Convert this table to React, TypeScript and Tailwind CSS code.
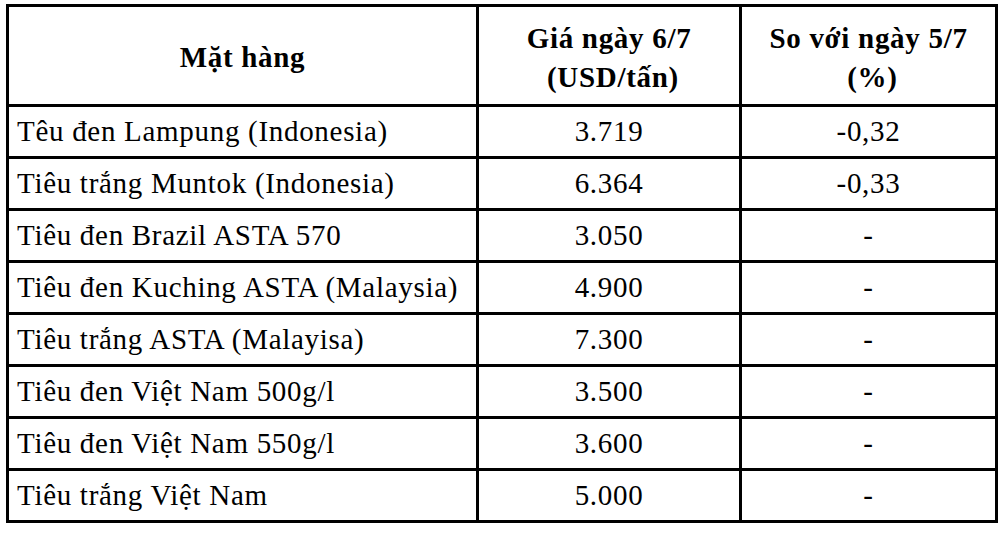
const rows = [
  { name: "Têu đen Lampung (Indonesia)", price: "3.719", change: "-0,32" },
  { name: "Tiêu trắng Muntok (Indonesia)", price: "6.364", change: "-0,33" },
  { name: "Tiêu đen Brazil ASTA 570", price: "3.050", change: "-" },
  { name: "Tiêu đen Kuching ASTA (Malaysia)", price: "4.900", change: "-" },
  { name: "Tiêu trắng ASTA (Malayisa)", price: "7.300", change: "-" },
  { name: "Tiêu đen Việt Nam 500g/l", price: "3.500", change: "-" },
  { name: "Tiêu đen Việt Nam 550g/l", price: "3.600", change: "-" },
  { name: "Tiêu trắng Việt Nam", price: "5.000", change: "-" },
];

export default function App() {
  return (
    <div className="w-[1000px] h-[533px] bg-white pt-[4px] pl-[6px] font-['Liberation_Serif','Times_New_Roman',serif] text-black">
      <table className="w-[989px] table-fixed border-collapse border-[3px] border-black">
        <colgroup>
          <col className="w-[470px]" />
          <col className="w-[263px]" />
          <col className="w-[256px]" />
        </colgroup>
        <thead>
          <tr className="h-[100px]">
            <th className="border-[3px] border-black text-center align-middle text-[29px] font-bold tracking-[0.7px] leading-[39px] pt-[4px]">
              Mặt hàng
            </th>
            <th className="border-[3px] border-black text-center align-middle text-[29px] font-bold tracking-[0.7px] leading-[39px] pt-[4px]">
              Giá ngày 6/7
              <br />
              &nbsp;(USD/tấn)
            </th>
            <th className="border-[3px] border-black text-center align-middle text-[29px] font-bold tracking-[0.7px] leading-[39px] pt-[4px]">
              So với ngày 5/7
              <br />
              &nbsp;(%)
            </th>
          </tr>
        </thead>
        <tbody>
          {rows.map((r) => (
            <tr key={r.name} className="h-[52px]">
              <td className="border-[3px] border-black pl-[8px] text-left align-middle text-[29px] tracking-[0.7px] whitespace-nowrap">
                {r.name}
              </td>
              <td className="border-[3px] border-black text-center align-middle text-[29px] tracking-[0.7px]">
                {r.price}
              </td>
              <td className="border-[3px] border-black text-center align-middle text-[29px] tracking-[0.7px]">
                {r.change}
              </td>
            </tr>
          ))}
        </tbody>
      </table>
    </div>
  );
}
